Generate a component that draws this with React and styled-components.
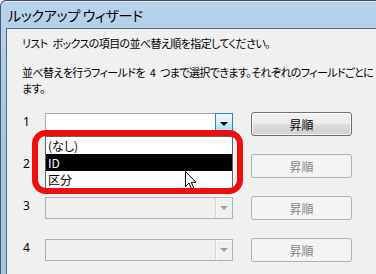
import React from 'react';
import styled, { createGlobalStyle, css } from 'styled-components';

const GlobalStyle = createGlobalStyle`
  html, body {
    margin: 0;
    width: 376px;
    height: 274px;
    overflow: hidden;
    background: #f0f0f0;
  }
  body {
    font-family: "Noto Sans CJK JP", "Noto Sans", sans-serif;
    font-feature-settings: "palt";
  }
`;

const Window = styled.div`
  position: relative;
  width: 470px;
  height: 274px;
  box-sizing: border-box;
  display: flex;
  flex-direction: column;
  background: linear-gradient(180deg, #b9d3ec 0%, #a8c7e5 40%, #a5c4e3 100%);
  border-top: 1px solid #3f4a57;
  border-left: 1px solid #4a5b6d;
  border-top-left-radius: 6px;
  padding-left: 5px;
`;

const TitleBar = styled.div`
  height: 27px;
  display: flex;
  align-items: center;
  padding-left: 2px;
  box-shadow: inset 0 1px 0 rgba(255, 255, 255, 0.6);
`;

const Title = styled.span`
  font-size: 14px;
  color: #000;
  letter-spacing: -0.3px;
`;

const Panel = styled.div`
  flex: 1;
  background: #f0f0f0;
  border-top: 1px solid #5a6a7c;
  border-left: 1px solid #5a6a7c;
  padding: 6px 0 0 15px;
  font-size: 12px;
  color: #000;
`;

const Line = styled.div`
  font-size: 11px;
  line-height: 16px;
  white-space: nowrap;
  letter-spacing: -0.6px;
  word-spacing: 3px;
  margin-top: ${({ $gap }) => $gap || 0}px;
`;

const Rows = styled.div`
  margin-top: 16px;
  display: flex;
  flex-direction: column;
  gap: 18px;
`;

const Row = styled.div`
  position: relative;
  display: grid;
  grid-template-columns: 23px 188px 119px;
  align-items: center;
  height: 24px;
`;

const Num = styled.span`
  align-self: start;
  padding: 2px 0 0 1px;
  line-height: 16px;
  font-family: "Noto Sans", sans-serif;
  font-size: 12px;
`;

const Combo = styled.div`
  position: relative;
  height: 22px;
  box-sizing: border-box;
  display: flex;
  border: 1px solid ${({ $disabled }) => ($disabled ? '#adb2b5' : '#abadb3')};
  background: ${({ $disabled }) => ($disabled ? '#f0f0f0' : '#fff')};
`;

const ComboText = styled.div`
  flex: 1;
`;

const Drop = styled.div`
  width: 17px;
  box-sizing: border-box;
  display: flex;
  align-items: center;
  justify-content: center;
  ${({ $hot }) =>
    $hot
      ? css`
          margin: -1px -1px -1px 0;
          width: 18px;
          border: 1px solid #3c7fb1;
          background: linear-gradient(180deg, #eaf6fd 0%, #d9f0fc 50%, #bee6fd 51%, #a7d9f5 100%);
        `
      : css`
          border-left: 1px solid #d7d7d7;
          box-shadow: inset 1px 1px 0 #fafafa;
          background: #f0f0f0;
        `}
`;

const Arrow = styled.span`
  width: 0;
  height: 0;
  border-left: 4px solid transparent;
  border-right: 4px solid transparent;
  border-top: 4px solid ${({ $disabled }) => ($disabled ? '#a0a0a0' : '#000')};
`;

const SortButton = styled.div`
  margin-left: 18px;
  height: 24px;
  box-sizing: border-box;
  display: flex;
  align-items: center;
  justify-content: center;
  border-radius: 3px;
  font-size: 12px;
  ${({ $disabled }) =>
    $disabled
      ? css`
          border: 1px solid #adb2b5;
          background: #f4f4f4;
          color: #838383;
        `
      : css`
          border: 1px solid #707070;
          background: linear-gradient(180deg, #f2f2f2 0%, #ebebeb 50%, #dddddd 51%, #cfcfcf 100%);
          box-shadow: inset 0 0 0 1px rgba(255, 255, 255, 0.7);
          color: #000;
        `}
`;

const List = styled.div`
  position: absolute;
  left: 0;
  top: 23px;
  width: 188px;
  box-sizing: border-box;
  border: 1px solid #646464;
  background: #fff;
  z-index: 2;
`;

const Item = styled.div`
  height: 17px;
  line-height: 17px;
  padding-left: 2px;
  font-size: 12px;
  background: ${({ $active }) => ($active ? '#000' : '#fff')};
  color: ${({ $active }) => ($active ? '#fff' : '#000')};
`;

const Callout = styled.div`
  position: absolute;
  left: -13px;
  top: 17px;
  width: 211px;
  height: 64px;
  box-sizing: border-box;
  border: 6px solid #f00d0d;
  border-radius: 14px;
  z-index: 3;
  pointer-events: none;
`;

const Cursor = styled.svg`
  position: absolute;
  left: 140px;
  top: 58px;
  z-index: 4;
`;

const ComboCell = styled.div`
  position: relative;
`;

const items = ['(なし)', 'ID', '区分'];

const App = () => {
  const rows = [1, 2, 3, 4];
  return (
    <>
      <GlobalStyle />
      <Window>
        <TitleBar>
          <Title>ルックアップ ウィザード</Title>
        </TitleBar>
        <Panel>
          <Line>リスト ボックスの項目の並べ替え順を指定してください。</Line>
          <Line $gap={13}>並べ替えを行うフィールドを 4 つまで選択できます。それぞれのフィールドごとに</Line>
          <Line>ます。</Line>
          <Rows>
            {rows.map((n) => {
              const disabled = n > 1;
              return (
                <Row key={n}>
                  <Num>{n}</Num>
                  <ComboCell>
                    <Combo $disabled={disabled}>
                      <ComboText />
                      <Drop $hot={!disabled}>
                        <Arrow $disabled={disabled} />
                      </Drop>
                    </Combo>
                    {n === 1 && (
                      <>
                        <List>
                          {items.map((it) => (
                            <Item key={it} $active={it === 'ID'}>
                              {it}
                            </Item>
                          ))}
                        </List>
                        <Callout />
                        <Cursor width="12" height="19" viewBox="0 0 12 19">
                          <path
                            d="M0.5 0.5 L0.5 15.5 L4 12 L6.5 18 L8.7 17 L6.3 11.3 L11 11.3 Z"
                            fill="#fff"
                            stroke="#000"
                            strokeWidth="1"
                            strokeLinejoin="miter"
                          />
                        </Cursor>
                      </>
                    )}
                  </ComboCell>
                  <SortButton $disabled={disabled}>昇順</SortButton>
                </Row>
              );
            })}
          </Rows>
        </Panel>
      </Window>
    </>
  );
};

export default App;
